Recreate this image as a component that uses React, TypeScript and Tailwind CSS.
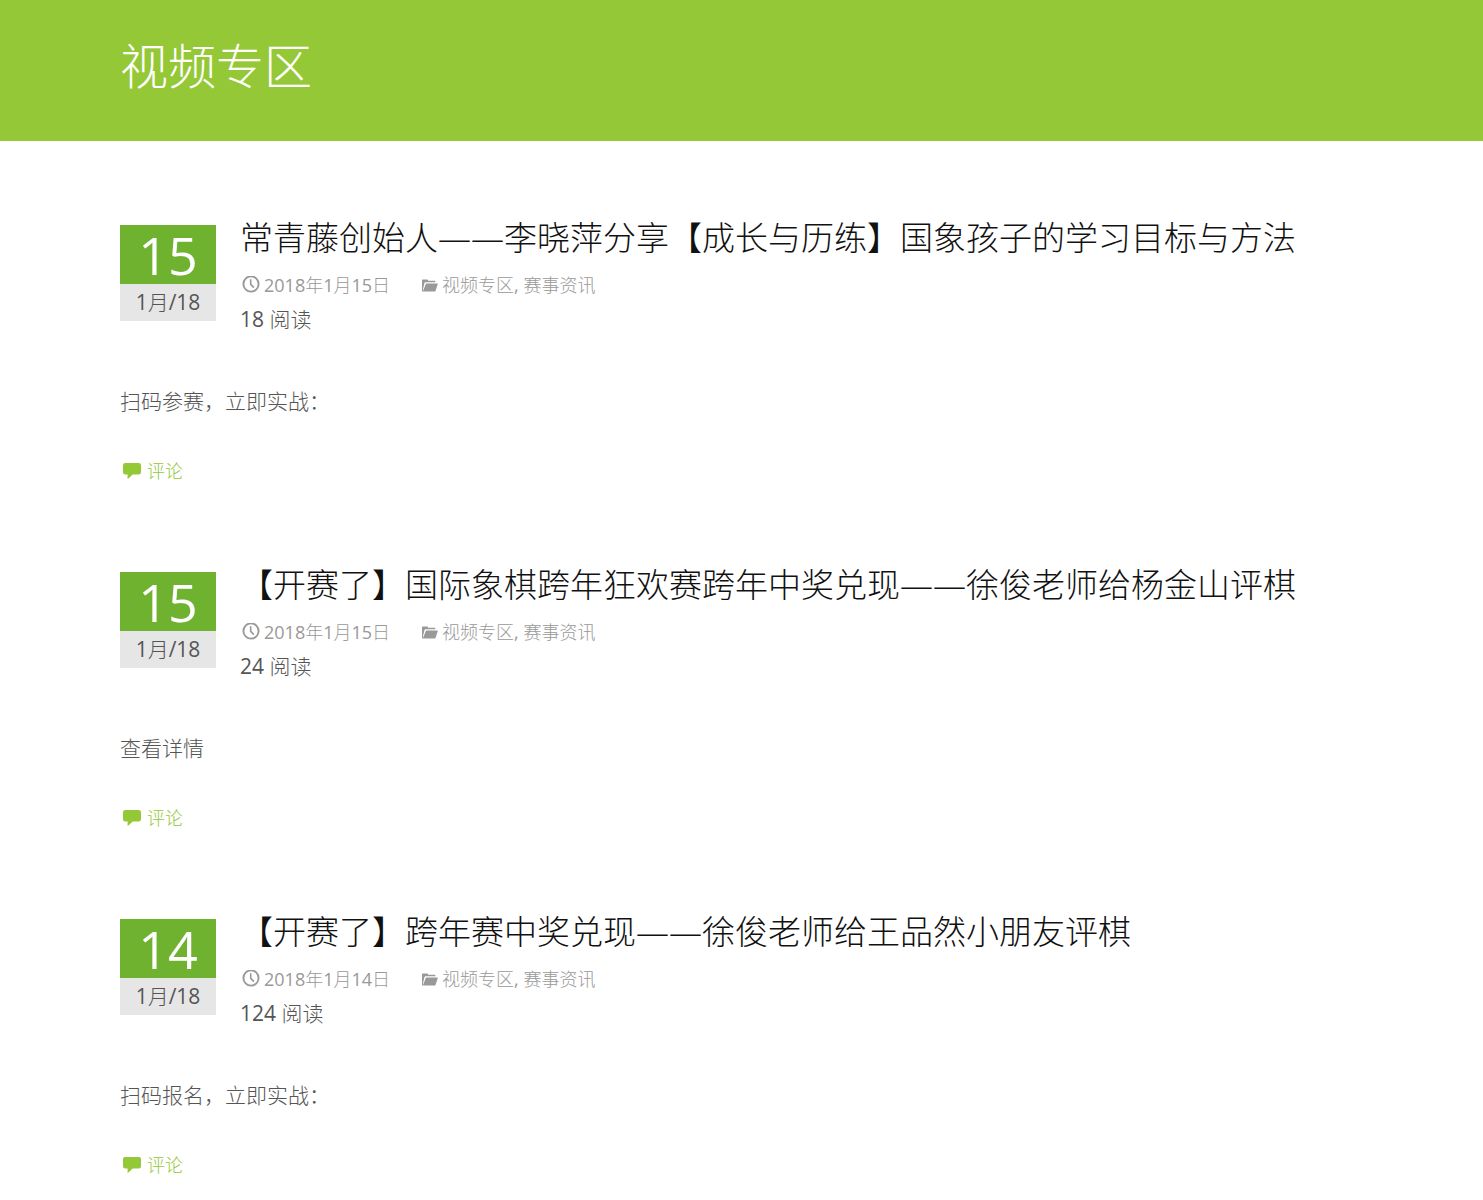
type Post = {
    day: string
    month: string
    title: string
    date: string
    reads: number
    excerpt: string
}

const posts: Post[] = [
    {
        day: "15",
        month: "1月/18",
        title: "常青藤创始人——李晓萍分享【成长与历练】国象孩子的学习目标与方法",
        date: "2018年1月15日",
        reads: 18,
        excerpt: "扫码参赛，立即实战：",
    },
    {
        day: "15",
        month: "1月/18",
        title: "【开赛了】国际象棋跨年狂欢赛跨年中奖兑现——徐俊老师给杨金山评棋",
        date: "2018年1月15日",
        reads: 24,
        excerpt: "查看详情",
    },
    {
        day: "14",
        month: "1月/18",
        title: "【开赛了】跨年赛中奖兑现——徐俊老师给王品然小朋友评棋",
        date: "2018年1月14日",
        reads: 124,
        excerpt: "扫码报名，立即实战：",
    },
]

function ClockIcon() {
    return (
        <svg className="h-[18px] w-[18px]" viewBox="0 0 18 18" fill="none" stroke="currentColor" strokeWidth="1.9" aria-hidden="true">
            <circle cx="9" cy="8" r="7.6" />
            <path d="M8.7 3.2v5.2l3.2 3.2" strokeWidth="1.6" />
        </svg>
    )
}

function FolderIcon() {
    return (
        <svg className="h-[13px] w-4" viewBox="0 0 16 13" fill="currentColor" aria-hidden="true">
            <path d="M0 1.2Q0 .4.8.4H5.2Q6 .4 6 1.2V1.8H12.6Q13.4 1.8 13.4 2.6V3.2H3.6Q2.7 3.2 2.5 4L1 10V12.4H.6Q0 12.4 0 11.8Z" />
            <path d="M4.6 4.4H15.4Q16.1 4.4 15.8 5.1L13.6 11.8Q13.4 12.4 12.7 12.4H.8L3.8 4.9Q4 4.4 4.6 4.4Z" />
        </svg>
    )
}

function CommentIcon() {
    return (
        <svg className="h-[17px] w-[18px]" viewBox="0 0 18 17" fill="currentColor" aria-hidden="true">
            <path d="M2.2 0H15.8Q18 0 18 2.2V9.3Q18 11.5 15.8 11.5H9.7L4.6 16.3V11.5H2.2Q0 11.5 0 9.3V2.2Q0 0 2.2 0Z" />
        </svg>
    )
}

function PostItem({ post }: { post: Post }) {
    return (
        <article className="mb-[74px] last:mb-0">
            <header className="flex items-start gap-6">
                {/* Date Badge */}
                <div className="mt-[9px] w-24 shrink-0 text-center">
                    <div className="h-[59px] bg-[#6eb22f] text-[52px] leading-[60px] font-medium text-white">{post.day}</div>
                    <div className="h-[37px] bg-[#e6e6e6] text-[21px] leading-[37px]">{post.month}</div>
                </div>

                {/* Title and Meta */}
                <div className="min-w-0">
                    <h2 className="text-[33px] leading-[44px] font-light text-[#111]">
                        <a href="#">{post.title}</a>
                    </h2>
                    <div className="mt-2 flex flex-wrap items-center gap-x-8 pl-[2px] text-lg leading-[34px] text-[#999]">
                        <a href="#" className="flex items-center gap-1">
                            <ClockIcon />
                            <time>{post.date}</time>
                        </a>
                        <span className="flex items-center gap-1">
                            <FolderIcon />
                            <span>
                                <a href="#">视频专区</a>, <a href="#">赛事资讯</a>
                            </span>
                        </span>
                    </div>
                    <p className="text-[21px] leading-[34px]">{post.reads} 阅读</p>
                </div>
            </header>

            <p className="mt-12 text-[21px] leading-[34px]">{post.excerpt}</p>

            <footer className="mt-[38px] text-lg leading-[31px] text-[#95c837]">
                <a href="#" className="inline-flex items-center gap-[6px] pl-[3px]">
                    <CommentIcon />
                    评论
                </a>
            </footer>
        </article>
    )
}

export default function App() {
    return (
        <div lang="zh-CN" className="bg-white font-['Open_Sans','Noto_Sans_CJK_SC_Light','Noto_Sans_CJK_SC',sans-serif] font-normal text-[#555]">
            <header className="bg-[#95c837] px-[120px] pt-[30px] pb-[39px]">
                <h1 className="text-5xl leading-[72px] text-white">视频专区</h1>
            </header>

            <main className="px-[120px] pt-[75px]">
                {posts.map((post) => (
                    <PostItem key={post.title} post={post} />
                ))}
            </main>
        </div>
    )
}
